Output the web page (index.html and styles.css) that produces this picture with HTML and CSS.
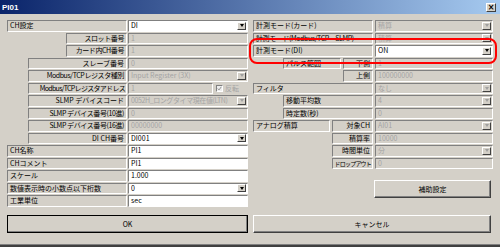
FILE: index.html
```html
<!DOCTYPE html>
<html lang="ja">
<head>
    <meta charset="UTF-8">
    <title>PI01</title>
    <link rel="stylesheet" href="styles.css">
</head>
<body>
<div class="window">
    <!-- タイトルバー -->
    <div class="titlebar">
        <span class="title">PI01</span>
        <span class="close">×</span>
    </div>

    <div class="content">
        <div class="columns">
            <!-- 左側: CH設定 -->
            <div class="col col-left">
                <div class="row"><span class="lbl">CH設定</span><span class="val on combo"><span class="txt">DI</span><i class="arrow"></i></span></div>
                <div class="row"><span class="lbl lv2 r tight">スロット番号</span><span class="val">1</span></div>
                <div class="row"><span class="lbl lv2 r tight">カード内CH番号</span><span class="val">1</span></div>
                <div class="row"><span class="lbl lv1 r">スレーブ番号</span><span class="val">0</span></div>
                <div class="row"><span class="lbl lv1 r tight">Modbus/TCPレジスタ種別</span><span class="val combo"><span class="txt">Input Register (3X)</span><i class="arrow"></i></span></div>
                <div class="row">
                    <span class="lbl lv1 r tighter">Modbus/TCPレジスタアドレス</span>
                    <span class="val short">1</span>
                    <span class="check"><i class="box"><svg viewBox="0 0 7 7" width="5" height="5"><polyline points="1,3.5 2.8,5.5 6,1.2" fill="none" stroke="#8a8a8a" stroke-width="1.3"/></svg></i>反転</span>
                </div>
                <div class="row"><span class="lbl lv1 r">SLMP デバイスコード</span><span class="val combo"><span class="txt tight">0052H_ロングタイマ現在値(LTN)</span><i class="arrow"></i></span></div>
                <div class="row"><span class="lbl lv1 r tight">SLMP デバイス番号(10進)</span><span class="val">0</span></div>
                <div class="row"><span class="lbl lv1 r tight">SLMP デバイス番号(16進)</span><span class="val">00000000</span></div>
                <div class="row"><span class="lbl lv1 r">DI CH番号</span><span class="val on combo"><span class="txt">DI001</span><i class="arrow"></i></span></div>
                <div class="row"><span class="lbl">CH名称</span><span class="val on">PI1</span></div>
                <div class="row"><span class="lbl">CHコメント</span><span class="val on">PI1</span></div>
                <div class="row"><span class="lbl">スケール</span><span class="val on">1.000</span></div>
                <div class="row"><span class="lbl">数値表示時の小数点以下桁数</span><span class="val on combo"><span class="txt">0</span><i class="arrow"></i></span></div>
                <div class="row"><span class="lbl">工業単位</span><span class="val on">sec</span></div>
            </div>

            <!-- 右側: 計測モード -->
            <div class="col col-right">
                <div class="row"><span class="lbl">計測モード(カード)</span><span class="val combo"><span class="txt">積算</span><i class="arrow"></i></span></div>
                <div class="row"><span class="lbl tight">計測モード(Modbus/TCP・SLMP)</span><span class="val combo"><span class="txt">積算</span><i class="arrow"></i></span></div>
                <div class="row"><span class="lbl">計測モード(DI)</span><span class="val on combo"><span class="txt">ON</span><i class="arrow"></i></span></div>
                <div class="row"><span class="lbl pulse">パルス範囲</span><span class="lbl w30 r">下側</span><span class="val">1</span></div>
                <div class="row"><span class="lbl w30 r ind90">上側</span><span class="val">100000000</span></div>
                <div class="row"><span class="lbl">フィルタ</span><span class="val combo"><span class="txt">なし</span><i class="arrow"></i></span></div>
                <div class="row"><span class="lbl sub">移動平均数</span><span class="val combo"><span class="txt">4</span><i class="arrow"></i></span></div>
                <div class="row"><span class="lbl sub">時定数(秒)</span><span class="val">0</span></div>
                <div class="row"><span class="lbl w77">アナログ積算</span><span class="lbl w41 r">対象CH</span><span class="val combo"><span class="txt">AI01</span><i class="arrow"></i></span></div>
                <div class="row"><span class="lbl w41 r ind79">積算率</span><span class="val">10000</span></div>
                <div class="row"><span class="lbl w41 r ind79">時間単位</span><span class="val combo"><span class="txt">分</span><i class="arrow"></i></span></div>
                <div class="row"><span class="lbl w41 r ind79 small">ドロップアウト</span><span class="val">0</span></div>
                <button class="btn aux">補助設定</button>
            </div>
        </div>

        <div class="actions">
            <button class="btn ok">OK</button>
            <button class="btn cancel">キャンセル</button>
        </div>
    </div>

    <!-- 注目枠 -->
    <div class="highlight"></div>
</div>
</body>
</html>
```

FILE: styles.css
```css
/* 基本 */
* { box-sizing: border-box; }
body {
    margin: 0;
    font-family: "Noto Sans CJK JP", sans-serif;
    font-size: 7px;
    color: #000;
    background-color: #d4d0c8;
}

.window {
    position: relative;
    width: 500px;
    height: 247px;
    background-color: #d4d0c8;
    border-bottom: 2px solid #404040;
    box-shadow: inset 0 -1px 0 #808080;
}

/* タイトルバー */
.titlebar {
    height: 14px;
    background: linear-gradient(to right, #0a246a, #a6caf0);
    display: flex;
    align-items: center;
    justify-content: space-between;
    padding: 0 4px 0 2px;
}
.title { color: #fff; font: bold 8px "Liberation Sans", sans-serif; }
.close {
    width: 10px;
    height: 9px;
    background-color: #d4d0c8;
    border: 1px solid;
    border-color: #fff #404040 #404040 #fff;
    font: bold 8px/7px "DejaVu Sans", sans-serif;
    text-align: center;
}

.content { padding: 6px 7px 0; }
.columns {
    display: grid;
    grid-template-columns: 241px 240px;
    column-gap: 5px;
}

/* 行 */
.row {
    display: flex;
    height: 11.5px;
    margin-bottom: 1px;
    gap: 1px;
}
.col-right .row { gap: 2px; }

.lbl {
    flex: none;
    width: 120px;
    border: 1px solid;
    border-color: #808080 #fff #fff #808080;
    line-height: 9.5px;
    padding: 0 2px;
    white-space: nowrap;
    overflow: hidden;
}
.lbl.r { text-align: right; }
.lbl.lv1 { margin-left: 21px; width: 99px; }
.lbl.lv2 { margin-left: 59px; width: 61px; }
.lbl.pulse { margin-left: 30px; width: 58px; }
.lbl.w30 { width: 30px; }
.lbl.ind90 { margin-left: 90px; }
.lbl.sub { margin-left: 30px; width: 90px; }
.lbl.w77 { width: 77px; }
.lbl.w41 { width: 41px; }
.lbl.ind79 { margin-left: 79px; }
.lbl.r.tighter { padding: 0 1px; }
.lbl.small { font-size: 6px; letter-spacing: -0.8px; padding: 0 1px; }

/* 半角カナ風に詰める */
.tight { letter-spacing: -0.4px; }
.tighter { letter-spacing: -0.7px; }

/* 入力欄 */
.val {
    flex: 1;
    min-width: 0;
    display: flex;
    align-items: center;
    border: 1px solid;
    border-color: #808080 #fff #fff #808080;
    background-color: #d4d0c8;
    color: #a4a4a4;
    line-height: 9.5px;
    padding: 0 1px 0 2px;
    white-space: nowrap;
    overflow: hidden;
}
.val.on { background-color: #fff; color: #000; }
.val.short { flex: none; width: 85px; }
.val .txt { flex: 1; overflow: hidden; }

.arrow {
    flex: none;
    width: 9px;
    height: 8px;
    background-color: #d4d0c8;
    border: 1px solid;
    border-color: #fff #404040 #404040 #fff;
    display: flex;
    align-items: center;
    justify-content: center;
}
.arrow::after {
    content: "";
    border-left: 2.5px solid transparent;
    border-right: 2.5px solid transparent;
    border-top: 3px solid #000;
}
.val:not(.on) .arrow::after { border-top-color: #a0a0a0; }

.check {
    flex: 1;
    display: flex;
    align-items: center;
    gap: 2px;
    padding-left: 2px;
    color: #a4a4a4;
}
.check .box {
    width: 7px;
    height: 7px;
    border: 1px solid;
    border-color: #808080 #fff #fff #808080;
    background-color: #eeeeee;
    display: flex;
    align-items: center;
    justify-content: center;
}

/* ボタン */
.btn {
    height: 18px;
    background-color: #d4d0c8;
    border: 1px solid;
    border-color: #fff #404040 #404040 #fff;
    box-shadow: inset -1px -1px 0 #808080;
    font-family: "Noto Sans CJK JP", sans-serif;
    font-size: 7px;
    color: #000;
    padding: 0;
}
.btn.aux { margin: 10px 0 0 121px; width: 117px; }
.btn.ok { outline: 1px solid #000; outline-offset: -1px; }

.actions {
    display: grid;
    grid-template-columns: 241px 238px;
    column-gap: 5px;
    margin-top: 7px;
}

/* 注目枠 */
.highlight {
    position: absolute;
    left: 249px;
    top: 38px;
    width: 248px;
    height: 26px;
    border: 2px solid #ff0000;
    border-radius: 8px;
}
```
